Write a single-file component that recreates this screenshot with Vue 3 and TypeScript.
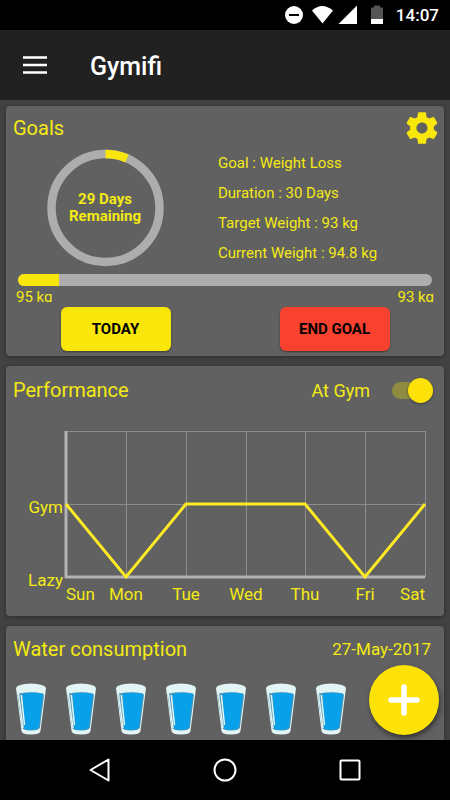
<script setup lang="ts">
import { computed, ref } from 'vue'

interface Detail {
  label: string
  value: string
}

const details: Detail[] = [
  { label: 'Goal', value: 'Weight Loss' },
  { label: 'Duration', value: '30 Days' },
  { label: 'Target Weight', value: '93 kg' },
  { label: 'Current Weight', value: '94.8 kg' },
]

const atGym = ref<boolean>(true)
const glasses = ref<number>(7)
const weightProgress = 10

const days: string[] = ['Sun', 'Mon', 'Tue', 'Wed', 'Thu', 'Fri', 'Sat']
const attendance: number[] = [1, 0, 1, 1, 1, 0, 1]

const left = 60
const right = 419
const top = 5
const bottom = 151
const middle = (top + bottom) / 2

const dayX = (i: number): number => Math.round(left + (i * (right - left)) / 6)

const linePoints = computed<string>(() =>
  attendance.map((v, i) => `${dayX(i)},${v ? middle : bottom}`).join(' '),
)

const anchor = (i: number): 'start' | 'middle' | 'end' =>
  i === 0 ? 'start' : i === days.length - 1 ? 'end' : 'middle'
</script>

<template>
  <div class="screen">
    <div class="status">
      <svg width="100" height="30" viewBox="0 0 100 30" aria-hidden="true">
        <circle cx="10" cy="15" r="9" fill="#fff" />
        <rect x="5" y="14" width="10" height="2" fill="#000" />
        <path d="M28 10.500Q38 1.500 49 10.500L38.500 23.500Z" fill="#fff" />
        <path d="M73 5.500V24H54.500Z" fill="#fff" />
        <path d="M87 7.500H90V5.500H96V7.500H99V24H87Z" fill="#555" />
        <rect x="87" y="19" width="12" height="5" fill="#fff" />
      </svg>
      <span>14:07</span>
    </div>

    <header class="appbar">
      <button class="plain menu" type="button" aria-label="Menu">
        <svg width="24" height="18" viewBox="0 0 24 18">
          <path d="M0 1.500H24M0 9H24M0 16.500H24" stroke="#fff" stroke-width="2.500" />
        </svg>
      </button>
      <h1>Gymifi</h1>
    </header>

    <main class="content">
      <section class="card">
        <div class="head short">
          <h2>Goals</h2>
          <button class="plain gear" type="button" aria-label="Goal settings">
            <svg width="38" height="38" viewBox="0 0 24 24">
              <path
                fill="#f9e60a"
                d="M19.430 12.980c.040-.320.070-.640.070-.980s-.030-.660-.070-.980l2.110-1.650c.190-.150.240-.420.120-.640l-2-3.460c-.120-.220-.390-.300-.610-.220l-2.490 1c-.520-.400-1.080-.730-1.690-.980l-.380-2.650C14.460 2.180 14.250 2 14 2h-4c-.250 0-.460.180-.490.420l-.380 2.650c-.610.250-1.170.590-1.690.980l-2.490-1c-.230-.090-.490 0-.610.220l-2 3.460c-.130.220-.070.490.120.640l2.110 1.650c-.040.320-.070.650-.070.980s.030.660.070.980l-2.110 1.650c-.190.150-.240.420-.120.640l2 3.460c.120.220.390.300.610.220l2.490-1c.520.400 1.080.730 1.690.980l.380 2.650c.030.240.240.420.490.420h4c.250 0 .460-.180.490-.420l.380-2.650c.610-.250 1.170-.590 1.690-.980l2.490 1c.230.090.490 0 .610-.220l2-3.460c.120-.220.070-.490-.120-.640l-2.110-1.650zM12 15.500c-1.930 0-3.500-1.570-3.500-3.500s1.570-3.500 3.500-3.500 3.500 1.570 3.500 3.500-1.570 3.500-3.500 3.500z"
              />
            </svg>
          </button>
        </div>

        <div class="summary">
          <div class="ring">
            <svg width="118" height="118" viewBox="0 0 118 118" aria-hidden="true">
              <circle cx="59.500" cy="59" r="54" fill="none" stroke="#adadad" stroke-width="8.500" />
              <path d="M59.500 5A54 54 0 0 1 81 9.500" fill="none" stroke="#f9e60a" stroke-width="8.500" />
            </svg>
            <p>29 Days<br />Remaining</p>
          </div>
          <ul class="details">
            <li v-for="d in details" :key="d.label">{{ d.label }} : {{ d.value }}</li>
          </ul>
        </div>

        <div class="track">
          <div class="fill" :style="{ width: weightProgress + '%' }"></div>
        </div>
        <div class="range"><span>95 kg</span><span>93 kg</span></div>

        <div class="actions">
          <button class="action today" type="button">TODAY</button>
          <button class="action end" type="button">END GOAL</button>
        </div>
      </section>

      <section class="card">
        <div class="head tall">
          <h2>Performance</h2>
          <label class="toggle">
            <span>At Gym</span>
            <input v-model="atGym" type="checkbox" role="switch" />
          </label>
        </div>
        <svg class="chart" viewBox="0 0 438 190" role="img">
          <g stroke="#8d8d8d" stroke-width="1" shape-rendering="crispEdges">
            <line v-for="(d, i) in days" :key="d" :x1="dayX(i)" :x2="dayX(i)" :y1="top" :y2="bottom" />
            <line :x1="left" :x2="right" :y1="top" :y2="top" />
            <line :x1="left" :x2="right" :y1="middle" :y2="middle" />
          </g>
          <path
            :d="`M${left} ${top}V${bottom}H${right}`"
            fill="none"
            stroke="#b4b4b4"
            stroke-width="3"
            stroke-linejoin="round"
          />
          <polyline :points="linePoints" fill="none" stroke="#fdea25" stroke-width="3" />
          <text x="57" y="87" text-anchor="end">Gym</text>
          <text x="57" y="160" text-anchor="end">Lazy</text>
          <text
            v-for="(d, i) in days"
            :key="d"
            :x="dayX(i)"
            y="174"
            :text-anchor="anchor(i)"
          >{{ d }}</text>
        </svg>
      </section>

      <section class="card">
        <div class="head">
          <h2>Water consumption</h2>
          <time datetime="2017-05-27">27-May-2017</time>
        </div>
        <div class="water">
          <svg v-for="n in glasses" :key="n" width="30" height="52" viewBox="0 0 30 52">
            <path d="M0 5Q1 1 15 .500Q29 1 30 5L24.500 48Q24 51.500 15 51.500Q6 51.500 5.500 48Z" fill="#e2f4f3" />
            <path d="M1.500 12L3 10.500Q15 8 27 10.500L28 12L23.800 45Q22 47.500 15 47.500Q8 47.500 6.300 45Z" fill="#4f93b5" />
            <path d="M2.500 11L7 45" stroke="#e2f4f3" stroke-width="1.500" />
            <path d="M6.500 11Q16 8.500 27 11L22.800 45Q20 47 15 47Q9 47 8 45Z" fill="#08a0e9" />
            <path d="M5.300 12L8.500 42" stroke="#e2f4f3" stroke-width="1.500" />
          </svg>
        </div>
      </section>
      <button class="plain fab" type="button" aria-label="Add glass" @click="glasses++">
        <svg width="32" height="32" viewBox="0 0 32 32">
          <path d="M16 3V29M3 16H29" stroke="#fff" stroke-width="5.500" stroke-linecap="round" />
        </svg>
      </button>
    </main>

    <nav class="navbar">
      <button class="plain" type="button" aria-label="Back">
        <svg width="24" height="24" viewBox="0 0 24 24">
          <path d="M20.500 1.500V22.500L2.500 12Z" fill="none" stroke="#fff" stroke-width="2" stroke-linejoin="round" />
        </svg>
      </button>
      <button class="plain" type="button" aria-label="Home">
        <svg width="24" height="24" viewBox="0 0 24 24">
          <circle cx="12" cy="12" r="10.500" fill="none" stroke="#fff" stroke-width="2" />
        </svg>
      </button>
      <button class="plain" type="button" aria-label="Recent apps">
        <svg width="24" height="24" viewBox="0 0 24 24">
          <rect x="2.500" y="2.500" width="19" height="19" rx="1" fill="none" stroke="#fff" stroke-width="2" />
        </svg>
      </button>
    </nav>
  </div>
</template>

<style>
body {
  margin: 0;
  background: #424242;
}
</style>

<style scoped>
.screen {
  display: flex;
  flex-direction: column;
  height: 100vh;
  background: #424242;
  color: #f4ea14;
  font-family: Roboto, 'Liberation Sans', sans-serif;
}
.screen * {
  box-sizing: border-box;
}
svg {
  display: block;
}
h1,
h2,
p,
ul {
  margin: 0;
  padding: 0;
}
.plain {
  display: flex;
  align-items: center;
  justify-content: center;
  padding: 0;
  border: 0;
  background: none;
  cursor: pointer;
}
.status {
  display: flex;
  flex: none;
  align-items: center;
  justify-content: flex-end;
  gap: 12px;
  height: 30px;
  padding-right: 11px;
  background: #000;
  color: #fff;
  font-size: 17px;
  font-weight: 500;
}
.appbar {
  display: flex;
  flex: none;
  align-items: center;
  gap: 43px;
  height: 70px;
  padding: 0 23px;
  background: #212121;
  color: #fff;
}
.appbar h1 {
  padding-top: 4px;
  font-size: 25px;
  font-weight: 500;
  line-height: 32px;
}
.content {
  position: relative;
  display: flex;
  flex: 1;
  flex-direction: column;
  gap: 10px;
  min-height: 0;
  padding: 6px 6px 0;
  overflow: hidden;
}
.card {
  flex: none;
  border-radius: 4px;
  background: #616161;
  box-shadow: 0 1px 4px rgba(0, 0, 0, 0.35);
}
.card:nth-of-type(3) {
  min-height: 140px;
}
.head {
  display: flex;
  align-items: center;
  justify-content: space-between;
  height: 46px;
  padding: 0 7px;
}
.head.short {
  height: 42px;
  padding-top: 2px;
}
.head.tall {
  height: 48px;
}
h2 {
  font-size: 20px;
  font-weight: 400;
  line-height: 24px;
}
.gear {
  margin-right: -4px;
}
.summary {
  display: grid;
  grid-template-columns: 198px 1fr;
  align-items: center;
  height: 120px;
}
.ring {
  display: grid;
  place-items: center;
}
.ring > * {
  grid-area: 1 / 1;
}
.ring p {
  font-size: 15px;
  font-weight: 700;
  line-height: 17px;
  text-align: center;
}
.details {
  padding-left: 14px;
  list-style: none;
  font-size: 15px;
  line-height: 30px;
}
.track {
  height: 12px;
  margin: 6px 12px 0;
  border-radius: 6px;
  background: #adadad;
  overflow: hidden;
}
.fill {
  height: 100%;
  background: #f9e60a;
}
.range {
  display: flex;
  justify-content: space-between;
  height: 16px;
  padding: 0 10px;
  overflow: hidden;
  font-size: 15px;
  line-height: 22px;
}
.actions {
  display: flex;
  justify-content: space-around;
  padding: 5px 0;
}
.action {
  width: 110px;
  height: 44px;
  padding: 0;
  border: 0;
  border-radius: 6px;
  color: #000;
  font-family: inherit;
  font-size: 15px;
  font-weight: 700;
  box-shadow: 0 1px 2px rgba(0, 0, 0, 0.4);
  cursor: pointer;
}
.today {
  background: #f9e60a;
}
.end {
  background: #f8412f;
}
.toggle {
  display: flex;
  align-items: center;
  gap: 22px;
  padding-right: 4px;
  font-size: 18px;
}
.toggle input {
  display: flex;
  align-items: center;
  width: 41px;
  height: 17px;
  margin: 0;
  border-radius: 9px;
  background: #8f8c42;
  appearance: none;
  cursor: pointer;
}
.toggle input::before {
  content: '';
  width: 25px;
  height: 25px;
  border-radius: 50%;
  background: #bdbdbd;
  box-shadow: 0 1px 3px rgba(0, 0, 0, 0.4);
}
.toggle input:checked::before {
  margin-left: auto;
  background: #fde209;
}
.chart {
  width: 100%;
  margin-top: 12px;
}
.chart text {
  fill: #f4ea14;
  font-size: 17px;
}
time {
  padding-right: 6px;
  font-size: 17px;
}
.water {
  display: flex;
  gap: 20px;
  padding: 11px 10px;
}
.fab {
  position: absolute;
  right: 11px;
  bottom: 5px;
  width: 70px;
  height: 70px;
  border-radius: 50%;
  background: #fde209;
  box-shadow: 1px 3px 5px rgba(0, 0, 0, 0.5);
}
.navbar {
  display: flex;
  flex: none;
  align-items: center;
  justify-content: center;
  gap: 101px;
  height: 60px;
  background: #000;
}
</style>
